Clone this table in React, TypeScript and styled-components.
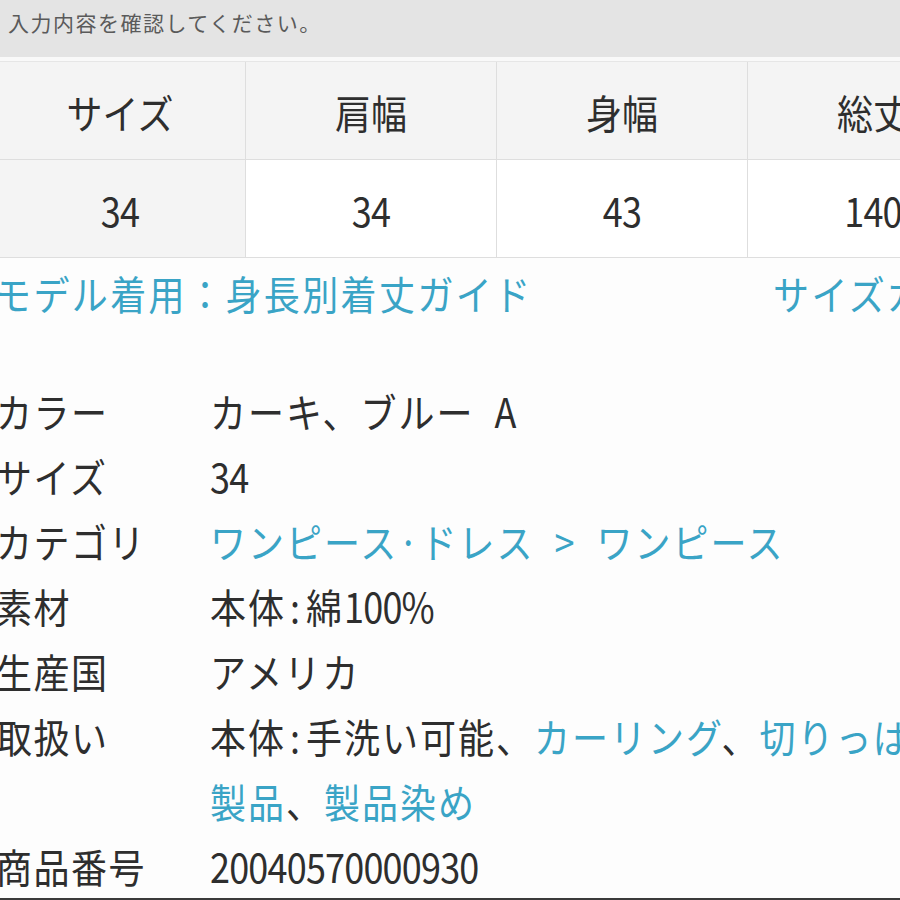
import React from "react";
import styled, { createGlobalStyle } from "styled-components";

const GlobalStyle = createGlobalStyle`
  html, body {
    margin: 0;
    padding: 0;
    background: #ffffff;
  }
  body {
    font-family: "Noto Sans CJK JP", "Noto Sans", sans-serif;
    color: #2e2e2e;
    overflow: hidden;
  }
`;

const Page = styled.div`
  width: 900px;
  height: 900px;
  box-sizing: border-box;
  overflow: hidden;
  background: #fdfdfd;
  border-bottom: 2px solid #3a3a3a;
`;

const TopBar = styled.div`
  height: 61px;
  box-sizing: border-box;
  background: #e4e4e4;
  padding: 7px 0 0 8px;
  font-size: 21px;
  letter-spacing: 1.5px;
  line-height: 30px;
  color: #5a5a5a;
  border-bottom: 4px solid #f9f9f9;
`;

const Table = styled.div`
  display: grid;
  grid-template-columns: repeat(4, 251px);
  margin: 0 0 0 -5px;
  width: 1004px;
  border-top: 1px solid #e6e6e6;
`;

const Cell = styled.div<{ $shade?: boolean }>`
  height: 98px;
  box-sizing: border-box;
  display: flex;
  align-items: center;
  justify-content: center;
  background: ${(p) => (p.$shade ? "#f4f4f4" : "#ffffff")};
  border-right: 1px solid #dedede;
  border-bottom: 1px solid #dedede;
  font-size: 36px;
  color: #2e2e2e;
`;

const Stretch = styled.span`
  display: inline-block;
  transform: scaleY(1.12);
`;

const Num = styled.span`
  letter-spacing: -0.8px;
`;

const LinkRow = styled.div`
  height: 68px;
  display: flex;
  align-items: center;
  margin-left: -5px;
  width: 1100px;
`;

const LinkText = styled.span<{ $grow?: boolean }>`
  color: #3aa4c6;
  font-size: 36px;
  letter-spacing: 2.4px;
  white-space: nowrap;
  ${(p) => (p.$grow ? "width: 778px;" : "")}
`;

const SpecList = styled.div`
  margin-top: 51px;
  margin-left: -4px;
  width: 1200px;
`;

const SpecRow = styled.div`
  display: grid;
  grid-template-columns: 214px 1fr;
  height: 65px;
  align-items: center;
  font-size: 36px;
  white-space: nowrap;
`;

const Label = styled.div`
  color: #2e2e2e;
  letter-spacing: 1.5px;
`;

const Value = styled.div`
  color: #2e2e2e;
  letter-spacing: 2px;
`;

const A = styled.span`
  color: #3aa4c6;
`;

const Thin = styled.span`
  letter-spacing: 0;
  margin: 0 6px 0 4px;
`;

export default function App() {
  const headers = ["サイズ", "肩幅", "身幅", "総丈"];
  const values = ["34", "34", "43", "140"];
  return (
    <Page>
      <GlobalStyle />
      <TopBar>入力内容を確認してください。</TopBar>
      <Table>
        {headers.map((h) => (
          <Cell key={h} $shade>
            <Stretch>{h}</Stretch>
          </Cell>
        ))}
        {values.map((v, i) => (
          <Cell key={i} $shade={i === 0}>
            <Stretch>
              <Num>{v}</Num>
            </Stretch>
          </Cell>
        ))}
      </Table>
      <LinkRow>
        <LinkText $grow>
          <Stretch>モデル着用：身長別着丈ガイド</Stretch>
        </LinkText>
        <LinkText>
          <Stretch>サイズガイド</Stretch>
        </LinkText>
      </LinkRow>
      <SpecList>
        <SpecRow>
          <Label><Stretch>カラー</Stretch></Label>
          <Value><Stretch>カーキ、ブルー{"\u2002"}A</Stretch></Value>
        </SpecRow>
        <SpecRow>
          <Label><Stretch>サイズ</Stretch></Label>
          <Value><Stretch><Num>34</Num></Stretch></Value>
        </SpecRow>
        <SpecRow>
          <Label><Stretch>カテゴリ</Stretch></Label>
          <Value>
            <Stretch>
              <A>ワンピース·ドレス{"\u2002"}&gt;{"\u2002"}ワンピース</A>
            </Stretch>
          </Value>
        </SpecRow>
        <SpecRow>
          <Label><Stretch>素材</Stretch></Label>
          <Value>
            <Stretch>
              本体<Thin>:</Thin>綿<Num>100%</Num>
            </Stretch>
          </Value>
        </SpecRow>
        <SpecRow>
          <Label><Stretch>生産国</Stretch></Label>
          <Value><Stretch>アメリカ</Stretch></Value>
        </SpecRow>
        <SpecRow>
          <Label><Stretch>取扱い</Stretch></Label>
          <Value>
            <Stretch>
              本体<Thin>:</Thin>手洗い可能、<A>カーリング</A>、<A>切りっぱなし</A>
            </Stretch>
          </Value>
        </SpecRow>
        <SpecRow>
          <Label />
          <Value>
            <Stretch>
              <A>製品</A>、<A>製品染め</A>
            </Stretch>
          </Value>
        </SpecRow>
        <SpecRow>
          <Label><Stretch>商品番号</Stretch></Label>
          <Value><Stretch><Num>20040570000930</Num></Stretch></Value>
        </SpecRow>
      </SpecList>
    </Page>
  );
}
